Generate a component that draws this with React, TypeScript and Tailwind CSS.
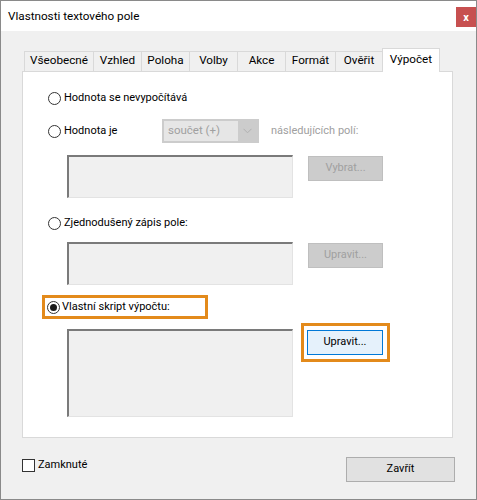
import React from "react";

const font = { fontFamily: 'Roboto, "Liberation Sans", sans-serif' };

function Radio({ checked = false }: { checked?: boolean }) {
  return (
    <span className="w-[13px] h-[13px] rounded-full border border-[#333333] bg-white flex items-center justify-center shrink-0">
      {checked && <span className="w-[7px] h-[7px] rounded-full bg-[#1a1a1a]" />}
    </span>
  );
}

function TextBox({ h }: { h: string }) {
  return (
    <div
      className={`w-[226px] ${h} bg-[#f0f0f0] border-t-2 border-l-2 border-r border-b border-t-[#7a7a7a] border-l-[#7a7a7a] border-r-[#e3e3e3] border-b-[#e3e3e3]`}
    />
  );
}

function DisabledButton({ label }: { label: string }) {
  return (
    <div className="w-[75px] h-[25px] bg-[#cccccc] border border-[#bfbfbf] flex items-center justify-center text-[#a0a0a0]">
      {label}
    </div>
  );
}

const tabs: { label: string; w: string }[] = [
  { label: "Všeobecné", w: "w-[69px]" },
  { label: "Vzhled", w: "w-[48px]" },
  { label: "Poloha", w: "w-[48px]" },
  { label: "Volby", w: "w-[48px]" },
  { label: "Akce", w: "w-[48px]" },
  { label: "Formát", w: "w-[50px]" },
  { label: "Ověřit", w: "w-[47px]" },
];

export default function App() {
  return (
    <div
      className="w-[477px] h-[500px] border border-[#8a8a8a] bg-[#f0f0f0] text-[11px] text-black flex flex-col overflow-hidden"
      style={font}
    >
      {/* Title bar */}
      <div className="h-[30px] bg-white flex items-start justify-between shrink-0">
        <span className="pl-[7px] pt-[7px] leading-[16px] text-[11.7px]">Vlastnosti textového pole</span>
        <div className="mt-[6px] w-[20px] h-[20px] bg-[#c75050] flex items-center justify-center text-white text-[11px] font-bold leading-none">
          x
        </div>
      </div>

      {/* Body */}
      <div className="flex flex-col pl-[21px]">
        {/* Tabs */}
        <div className="flex items-end pl-[2px] mt-[17px] h-[23px] relative z-10">
          {tabs.map((t) => (
            <div
              key={t.label}
              className={`${t.w} h-[20px] border-t border-l border-[#d9d9d9] bg-[#f0f0f0] flex items-center justify-center leading-none pb-[1px] text-[11.7px]`}
            >
              {t.label}
            </div>
          ))}
          <div className="w-[58px] h-[24px] -mb-px border-t border-l border-r border-[#d9d9d9] bg-white flex items-start justify-center pt-[5px] leading-none text-[11.7px]">
            Výpočet
          </div>
        </div>

        {/* Panel */}
        <div className="w-[431px] h-[367px] bg-white border border-[#d9d9d9] flex flex-col pl-[24px]">
          {/* Row 1 */}
          <div className="mt-[16px] h-[20px] flex items-center gap-[3px] pl-[1px]">
            <Radio />
            <span>Hodnota se nevypočítává</span>
          </div>

          {/* Row 2 */}
          <div className="mt-[11px] h-[24px] flex items-center pl-[1px]">
            <div className="w-[114px] flex items-center gap-[3px]">
              <Radio />
              <span>Hodnota je</span>
            </div>
            <div className="w-[97px] h-[24px] bg-[#cccccc] flex items-center p-[2px]">
              <div className="w-[74px] h-[20px] bg-[#e6e6e6] flex items-center pl-[4px] text-[#a0a0a0] text-[11.5px]">
                součet (+)
              </div>
              <div className="flex-1 flex items-center justify-center">
                <svg width="9" height="6" viewBox="0 0 9 6">
                  <path d="M0.5 0.8 L4.5 4.8 L8.5 0.8" fill="none" stroke="#b0b0b0" strokeWidth="1" />
                </svg>
              </div>
            </div>
            <span className="ml-[12px] text-[#a0a0a0]">následujících polí:</span>
          </div>

          {/* Row 3 */}
          <div className="mt-[12px] flex items-start pl-[20px] gap-[15px]">
            <TextBox h="h-[43px]" />
            <div className="mt-[1px]">
              <DisabledButton label="Vybrat..." />
            </div>
          </div>

          {/* Row 4 */}
          <div className="mt-[15px] h-[20px] flex items-center gap-[3px] pl-[1px]">
            <Radio />
            <span>Zjednodušený zápis pole:</span>
          </div>

          {/* Row 5 */}
          <div className="mt-[9px] flex items-start pl-[20px] gap-[15px]">
            <TextBox h="h-[43px]" />
            <div className="mt-[1px]">
              <DisabledButton label="Upravit..." />
            </div>
          </div>

          {/* Row 6 */}
          <div className="mt-[10px] -ml-[5px] w-[166px] h-[24px] border-[3px] border-[#e38a1b] flex items-center gap-[2px] pl-[2px]">
            <Radio checked />
            <span>Vlastní skript výpočtu:</span>
          </div>

          {/* Row 7 */}
          <div className="mt-[4px] flex items-start pl-[20px]">
            <div className="mt-[6px]">
              <TextBox h="h-[88px]" />
            </div>
            <div className="ml-[8px] w-[89px] h-[39px] border-[3px] border-[#e38a1b] pt-[4px] pl-[3px]">
              <div className="w-[76px] h-[25px] bg-[#e5f1fb] border border-[#0078d7] flex items-center justify-center">
                Upravit...
              </div>
            </div>
          </div>
        </div>

        {/* Bottom row */}
        <div className="mt-[19px] flex items-start">
          <div className="mt-[1px] flex items-center gap-[3px]">
            <span className="w-[13px] h-[13px] border border-[#333333] bg-white shrink-0" />
            <span className="leading-[14px]">Zamknuté</span>
          </div>
          <div className="ml-auto mr-[21px] w-[109px] h-[25px] bg-[#e1e1e1] border border-[#adadad] flex items-center justify-center">
            Zavřít
          </div>
        </div>
      </div>
    </div>
  );
}
